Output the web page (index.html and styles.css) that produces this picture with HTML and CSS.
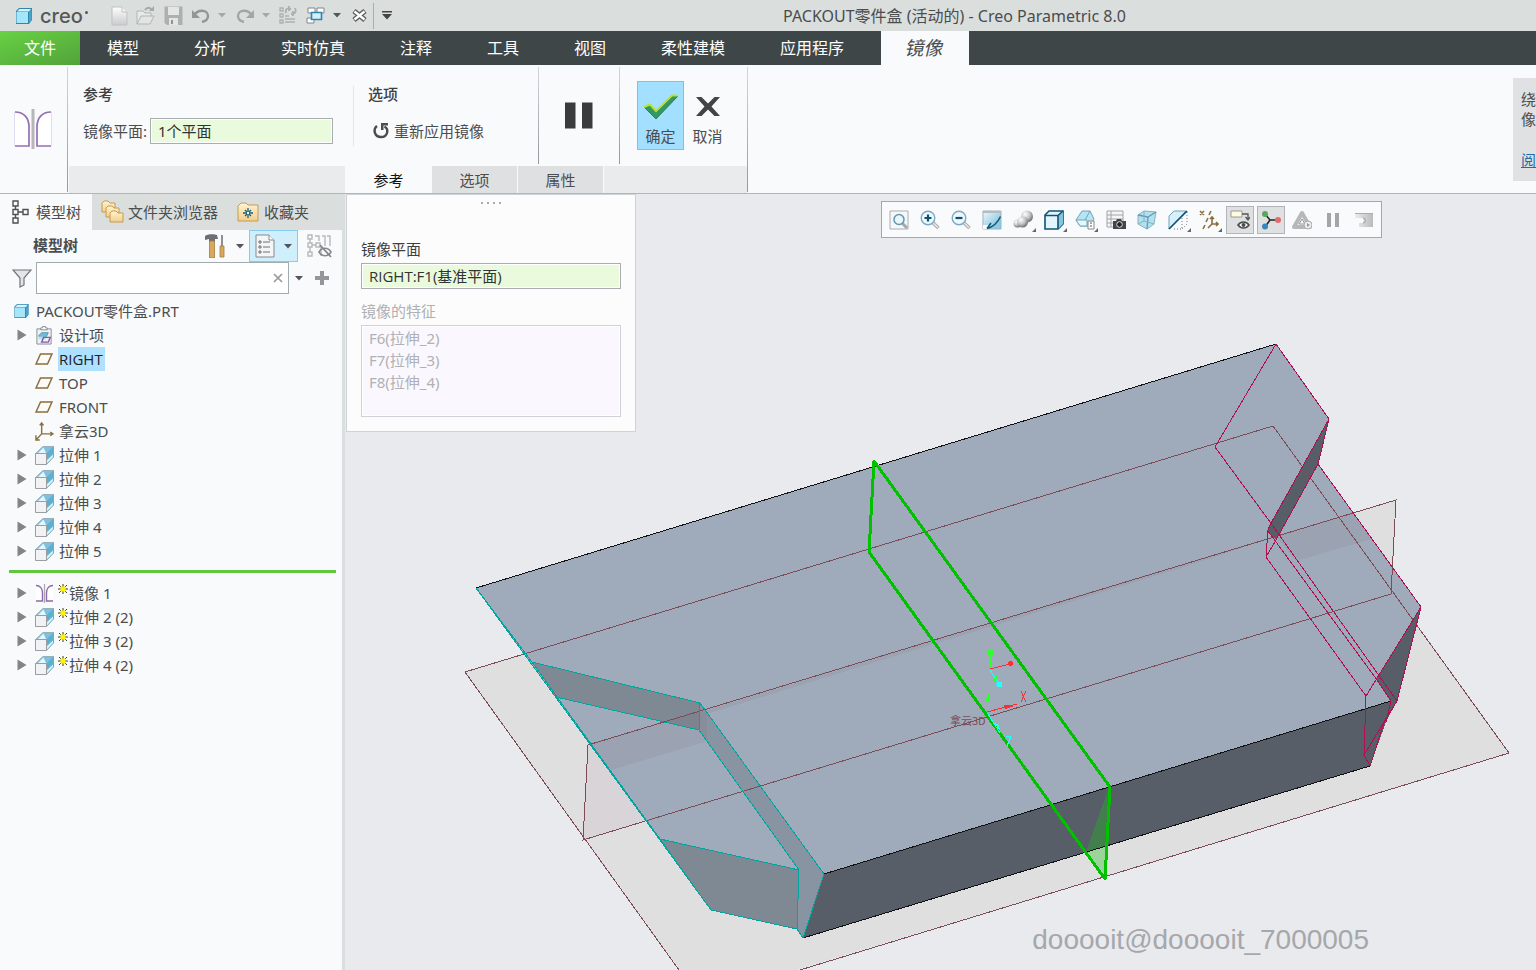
FILE: index.html
```html
<!DOCTYPE html>
<html lang="zh-CN">
<head>
<meta charset="utf-8">
<title>PACKOUT零件盒 (活动的) - Creo Parametric 8.0</title>
<link rel="stylesheet" href="styles.css">
</head>
<body>
<svg class="defs" aria-hidden="true">
  <defs>
    <linearGradient id="steel" x1="0" y1="0" x2="0" y2="1"><stop offset="0" stop-color="#fdfdfd"/><stop offset="1" stop-color="#c9cccd"/></linearGradient>
    <linearGradient id="ice" x1="0" y1="0" x2="1" y2="1"><stop offset="0" stop-color="#eefaff"/><stop offset="1" stop-color="#6fb9d6"/></linearGradient>
    <linearGradient id="grey" x1="0" y1="0" x2="1" y2="0"><stop offset="0" stop-color="#eceded"/><stop offset="1" stop-color="#b9bbbc"/></linearGradient>
    <linearGradient id="tan" x1="0" y1="0" x2="0" y2="1"><stop offset="0" stop-color="#fff3d0"/><stop offset="1" stop-color="#f1cf8c"/></linearGradient>
    <radialGradient id="ball" cx=".35" cy=".3" r=".8"><stop offset="0" stop-color="#fff"/><stop offset=".5" stop-color="#c4c4c4"/><stop offset="1" stop-color="#5a5a5a"/></radialGradient>
    <symbol id="cube" viewBox="0 0 18 18"><path d="M1 4 4 1H17V13L14 17H1Z" fill="#2f87ad"/><path d="M2 4.500 4.500 2H16L14 4.500Z" fill="#d5f4ff"/><path d="M1.500 5H13V16H1.500Z" fill="#a5e6fb"/><path d="M14 5 16.500 2.500V13L14 16Z" fill="#4aa3c8"/></symbol>
    <symbol id="caret" viewBox="0 0 8 5"><path d="M0 0H8L4 4.500Z" fill="currentColor"/></symbol>
    <symbol id="arrow" viewBox="0 0 10 12"><path d="M.5.500 9.500 6 .5 11.500Z" fill="#838485"/></symbol>
    <symbol id="extrude" viewBox="0 0 19 19"><path d="M.5 7.500 8 .5H18.500L11.500 7.500Z" fill="#7fc1dc" stroke="#8aa5b0" stroke-width=".8"/><path d="M3 7 8.500 1.500 11 7Z" fill="#e4f7fe"/><path d="M11.500 7.500 18.500.5V11L11.500 18Z" fill="#5fafcf"/><path d="M12 14 18.500 8V11L12 18Z" fill="#d3f2fb"/><path d="M.5 7.500H11.500V18.500H.5Z" fill="#f2f2f4" stroke="#9c9da0"/><path d="M11.500 18.500 18.500 11V.5" stroke="#8aa5b0" fill="none"/></symbol>
    <symbol id="plane" viewBox="0 0 18 12"><path d="M5.500 1H17L12.500 11H1Z" fill="#fdfbf5" stroke="#8a6f3f" stroke-width="1.500"/></symbol>
    <symbol id="mirror" viewBox="0 0 38 40"><path d="M1 3V37" stroke="#c9c2e4"/><path d="M1 3C10 3 15 9 15 18V37H1" fill="#fff" stroke="#9470b4" stroke-width="1.700"/><path d="M37 3V37" stroke="#c9c2e4"/><path d="M37 3C28 3 23 9 23 18V37H37" fill="#fff" stroke="#9470b4" stroke-width="1.700"/><path d="M17.500 0H20.500V40H17.500Z" fill="#b7b7b9"/></symbol>
    <symbol id="mirror-s" viewBox="0 0 19 19"><path d="M1 1.500C6 1.500 7.500 6 7.500 9V17H1M18 1.500C13 1.500 11.500 6 11.500 9V17H18" fill="#fff" stroke="#8c68ae" stroke-width="1.400"/><path d="M9.500 0V19" stroke="#aaa" stroke-width="1.300"/></symbol>
    <symbol id="spark" viewBox="0 0 10 10"><path d="M5 0V10M0 5H10M1 1 9 9M9 1 1 9" stroke="#3a3d20"/><path d="M2.500 2.500H7.500V7.500H2.500Z" fill="#fff200"/></symbol>
    <symbol id="zoomlens" viewBox="0 0 20 20"><path d="M12 12 18.500 18" stroke="#a9abac" stroke-width="3.500"/><path d="M12 12 18 17.500" stroke="#e9e9e9" stroke-width="1.500"/><circle cx="8" cy="8" r="6.800" fill="#eef8fd" stroke="#7fa9c0" stroke-width="1.400"/></symbol>
  </defs>
</svg>

<header class="titlebar">
  <svg class="i18 logo-cube"><use href="#cube"/></svg>
  <span class="logo">creo<i></i></span>
  <div class="quick">
    <button class="q q-new" aria-label="新建"><svg width="17" height="20" viewBox="0 0 17 20"><path d="M1 1H11L16 6V19H1Z" fill="url(#steel)" stroke="#bfc2c2"/><path d="M11 1V6H16" fill="#f4f4f4" stroke="#bfc2c2"/></svg></button>
    <button class="q q-open" aria-label="打开"><svg width="20" height="20" viewBox="0 0 20 20"><path d="M2 18V5H8L10 7H16V10" fill="#e8eaea" stroke="#b2b5b5"/><path d="M2 18 6 10H19L15 18Z" fill="#e3e5e5" stroke="#b2b5b5"/><path d="M10 4C12 1 15 1 17 4" fill="none" stroke="#a6a9a9" stroke-width="2"/><path d="M14 5H19V0" fill="#a6a9a9"/></svg></button>
    <button class="q q-save" aria-label="保存"><svg width="19" height="20" viewBox="0 0 19 20"><path d="M.5.500H18.500V19H3L.5 17Z" fill="#adb0b1"/><path d="M4 1H15V9H4Z" fill="#e4e6e6"/><path d="M5 12H14V19H5Z" fill="#e4e6e6"/><path d="M7 14H9V18H7Z" fill="#909394"/></svg></button>
    <button class="q q-undo" aria-label="撤消"><svg width="20" height="16" viewBox="0 0 20 16"><path d="M3 8C6 1 17 1 17 8 17 11 15 13 11 14" fill="none" stroke="#939697" stroke-width="2.400"/><path d="M1 2V10H9Z" fill="#939697"/></svg></button>
    <svg class="caret faint c1"><use href="#caret"/></svg>
    <button class="q q-redo" aria-label="重做"><svg width="20" height="16" viewBox="0 0 20 16"><path d="M17 8C14 1 3 1 3 8 3 11 5 13 9 14" fill="none" stroke="#a3a6a7" stroke-width="2.400"/><path d="M19 2V10H11Z" fill="#a3a6a7"/></svg></button>
    <svg class="caret faint c2"><use href="#caret"/></svg>
    <button class="q q-regen" aria-label="重新生成"><svg width="18" height="19" viewBox="0 0 18 19" fill="none" stroke="#aeb1b1"><path d="M1 2H4V5H1ZM1 8H4V11H1ZM1 14H4V17H1ZM6 10H10M6 13H16M6 16H16" stroke-width="1.400"/><path d="M7 7C6 2 9 2 12 3M10 0V5M16 2C18 7 15 8 12 8M14 5V10" stroke-width="1.900"/></svg></button>
    <button class="q q-win" aria-label="窗口"><svg width="19" height="18" viewBox="0 0 19 18"><g fill="#fff" stroke="#838687"><path d="M2 1H9V6H2Z"/><path d="M11 1H18V6H11Z"/><path d="M1 11H8V16H1Z"/></g><path d="M5.500 5.500H15.500V12.500H5.500Z" fill="#d5f0fb" stroke="#2c87ac" stroke-width="1.600"/></svg></button>
    <svg class="caret c3"><use href="#caret"/></svg>
    <button class="q q-close" aria-label="关闭"><svg width="15" height="13" viewBox="0 0 15 13"><path d="M2 2 13 11M13 2 2 11" stroke="#58595a" stroke-width="5"/><path d="M2.500 2.500 12.500 10.500M12.500 2.500 2.500 10.500" stroke="#fff" stroke-width="2.400"/></svg></button>
    <span class="q-sep"></span>
    <button class="q q-more" aria-label="自定义"><svg width="10" height="9" viewBox="0 0 10 9"><path d="M0 0H10V1.500H0ZM0 3H10L5 8.500Z" fill="#444"/></svg></button>
  </div>
  <h1 class="title">PACKOUT零件盒 (活动的) - Creo Parametric 8.0</h1>
</header>

<nav class="menubar">
  <button class="file">文件</button>
  <div class="menus">
    <button>模型</button><button>分析</button><button>实时仿真</button><button>注释</button><button>工具</button><button>视图</button><button>柔性建模</button><button>应用程序</button>
  </div>
  <button class="active-menu">镜像</button>
</nav>

<section class="ribbon">
  <div class="feature"><svg width="38" height="40"><use href="#mirror"/></svg></div>
  <span class="rule tall"></span>
  <div class="dash">
    <div class="groups">
      <div class="group ref">
        <h2>参考</h2>
        <div class="row"><label for="mp">镜像平面:</label><input id="mp" class="collector" readonly value="1个平面"></div>
      </div>
      <span class="rule soft"></span>
      <div class="group opt">
        <h2>选项</h2>
        <button class="reapply"><svg width="18" height="18" viewBox="0 0 18 18"><path d="M5 4C1 7 2 15 9 15 16 15 17 7 12.500 4.500" fill="none" stroke="#4b4d4f" stroke-width="2.400"/><path d="M9 1H16V3.500H11.500V8H9Z" fill="#4b4d4f"/></svg>重新应用镜像</button>
      </div>
      <span class="rule"></span>
      <button class="pause" aria-label="暂停"><svg width="28" height="28" viewBox="0 0 28 28"><path d="M0 .500H10.500V26.500H0ZM17 .500H27.500V26.500H17Z" fill="#3b3b3c"/></svg></button>
      <span class="rule"></span>
      <div class="decide">
        <button class="ok"><svg width="36" height="28" viewBox="0 0 36 28"><path d="M1 14 7 12 13 19 30 3H35L13 26Z" fill="#2f9a63" stroke="#246e46" stroke-width=".8"/><path d="M1 14 7 11.500 13 18 29 2.500H35" fill="none" stroke="#b9e334" stroke-width="2"/></svg>确定</button>
        <button class="cancel"><svg width="36" height="28" viewBox="0 0 36 28"><path d="M6 4H11.500L18 10.500 24.500 4H30L21.500 13.500 30 23H24.500L18 16.500 11.500 23H6L14.500 13.500Z" fill="#434446"/></svg>取消</button>
      </div>
    </div>
    <div class="strip">
      <span class="fill-l"></span>
      <button class="on">参考</button><button>选项</button><button>属性</button>
      <span class="fill-r"></span>
    </div>
  </div>
  <span class="rule tall"></span>
  <aside class="tip"><p>绕<br>像</p><a href="#more">阅</a></aside>
</section>

<main class="work">
  <aside class="side">
    <div class="side-tabs">
      <button class="on"><svg width="17" height="24" viewBox="0 0 17 24" fill="none" stroke="#4d4f51" stroke-width="1.400"><path d="M1 1H6V6H1ZM1 9.500H6V14.500H1ZM1 18H6V23H1ZM11 9.500H16V14.500H11ZM3.500 6V9.500M3.500 14.500V18M6 12H11"/></svg>模型树</button>
      <button><svg width="23" height="24" viewBox="0 0 23 24" fill="url(#tan)" stroke="#c69b52"><path d="M1 12V3L3 1H7L9 3H14V12Z"/><path d="M5 17V8L7 6H11L13 8H18V17Z"/><path d="M9 22V13L11 11H15L17 13H22V22Z"/></svg>文件夹浏览器</button>
      <button><svg width="22" height="20" viewBox="0 0 22 20"><path d="M1 19V4L4 1H9L11 3H21V19Z" fill="url(#tan)" stroke="#c69b52"/><path d="M11 6V16M6 11H16M8 8 14 14M14 8 8 14" stroke="#176083" stroke-width="1.300"/><circle cx="11" cy="11" r="1.200" fill="#fff"/></svg>收藏夹</button>
    </div>
    <div class="tree-bar">
      <h2>模型树</h2>
      <button aria-label="设置"><svg width="21" height="24" viewBox="0 0 21 24"><path d="M1 2C3 0 10 0 13 1L14 5H11V8H5V5L1 6Z" fill="#6b7074"/><path d="M5.500 7H10.500V24H5.500Z" fill="#d8a860" stroke="#a67b3e" stroke-width=".8"/><path d="M18 1V12" stroke="#8b9095" stroke-width="2"/><path d="M16 12H20V23H16Z" fill="#d8a860" stroke="#a67b3e" stroke-width=".8"/></svg></button>
      <svg class="caret"><use href="#caret"/></svg>
      <button class="show" aria-label="显示"><svg width="20" height="24" viewBox="0 0 20 24"><path d="M1 1H14L19 6V23H1Z" fill="#f4f5f5" stroke="#85898c"/><path d="M14 1V6H19" fill="#fff" stroke="#85898c"/><path d="M4 7H6V9H4ZM4 12H6V14H4ZM4 17H6V19H4ZM8 8H15M8 13H15M8 18H15" fill="none" stroke="#6d7174"/></svg><svg class="caret"><use href="#caret"/></svg></button>
      <button class="hide" aria-label="隐藏"><svg width="25" height="24" viewBox="0 0 25 24" fill="none" stroke="#b6babb"><path d="M1 1H5V5H1ZM1 9H5V13H1ZM1 18H5V22H1ZM9 9H13V13H9ZM3 5V9M3 13V18M5 11H9M8 2H12V7M15 2H18V12M20 2H23V12M14 12V22" stroke-width="1.400"/><path d="M12 18C15 13 21 13 24 18 21 23 15 23 12 18Z" stroke="#85898b" stroke-width="1.600"/><path d="M13 11 24 23" stroke="#85898b" stroke-width="1.800"/></svg></button>
    </div>
    <div class="search">
      <svg width="20" height="19" viewBox="0 0 20 19"><path d="M1 1H19L12 9V16L8 18V9Z" fill="#e3e5e6" stroke="#717578" stroke-width="1.200"/></svg>
      <div class="box"><input aria-label="搜索模型树" type="text"><button aria-label="清除"><svg width="10" height="10" viewBox="0 0 10 10"><path d="M1 1 9 9M9 1 1 9" stroke="#97999a" stroke-width="1.700"/></svg></button></div>
      <svg class="caret"><use href="#caret"/></svg>
      <button aria-label="添加"><svg width="14" height="14" viewBox="0 0 14 14"><path d="M5 0H9V5H14V9H9V14H5V9H0V5H5Z" fill="#94979a"/></svg></button>
    </div>
    <ul class="tree">
      <li class="root"><svg class="i16"><use href="#cube"/></svg><span>PACKOUT零件盒.PRT</span></li>
      <li><svg class="tw"><use href="#arrow"/></svg><svg class="ic" viewBox="0 0 20 20"><path d="M2 3H17V19H2Z" fill="#f0f1f2" stroke="#888d92"/><path d="M6 4V2H8V.5H11V2H13V4Z" fill="#fff" stroke="#888d92"/><path d="M4 10 7 7H14L12 11H4Z" fill="#6fbedc" stroke="#357d9b" stroke-width=".7"/><path d="M4 11H11V14H4Z" fill="#a9e0f2"/><path d="M9 12H16L14 17H7Z" fill="none" stroke="#8459aa" stroke-width="1.500"/></svg><span>设计项</span></li>
      <li><i class="tw"></i><svg class="ic" viewBox="0 -3 19 19"><use href="#plane" width="18" height="12"/></svg><span class="sel">RIGHT</span></li>
      <li><i class="tw"></i><svg class="ic" viewBox="0 -3 19 19"><use href="#plane" width="18" height="12"/></svg><span>TOP</span></li>
      <li><i class="tw"></i><svg class="ic" viewBox="0 -3 19 19"><use href="#plane" width="18" height="12"/></svg><span>FRONT</span></li>
      <li><i class="tw"></i><svg class="ic" viewBox="0 0 20 20" fill="none" stroke="#8a6f3f" stroke-width="1.500"><path d="M7 2V12.500H18M7 12.500 2 18M5 3.500 7 1 9 3.500M16 10.500 19 12.500 16 14.500M1 14V19H5"/></svg><span>拿云3D</span></li>
      <li><svg class="tw"><use href="#arrow"/></svg><svg class="ic"><use href="#extrude"/></svg><span>拉伸 1</span></li>
      <li><svg class="tw"><use href="#arrow"/></svg><svg class="ic"><use href="#extrude"/></svg><span>拉伸 2</span></li>
      <li><svg class="tw"><use href="#arrow"/></svg><svg class="ic"><use href="#extrude"/></svg><span>拉伸 3</span></li>
      <li><svg class="tw"><use href="#arrow"/></svg><svg class="ic"><use href="#extrude"/></svg><span>拉伸 4</span></li>
      <li><svg class="tw"><use href="#arrow"/></svg><svg class="ic"><use href="#extrude"/></svg><span>拉伸 5</span></li>
    </ul>
    <hr class="insert">
    <ul class="tree after">
      <li><svg class="tw"><use href="#arrow"/></svg><svg class="ic"><use href="#mirror-s"/></svg><svg class="spark"><use href="#spark"/></svg><span>镜像 1</span></li>
      <li><svg class="tw"><use href="#arrow"/></svg><svg class="ic"><use href="#extrude"/></svg><svg class="spark"><use href="#spark"/></svg><span>拉伸 2 (2)</span></li>
      <li><svg class="tw"><use href="#arrow"/></svg><svg class="ic"><use href="#extrude"/></svg><svg class="spark"><use href="#spark"/></svg><span>拉伸 3 (2)</span></li>
      <li><svg class="tw"><use href="#arrow"/></svg><svg class="ic"><use href="#extrude"/></svg><svg class="spark"><use href="#spark"/></svg><span>拉伸 4 (2)</span></li>
    </ul>
  </aside>

  <section class="stage">
    <svg class="scene" viewBox="345 194 1191 776" preserveAspectRatio="xMinYMin slice" shape-rendering="crispEdges" fill="none">
      <path d="M465 672 1273 426 1509 753 701 999Z" fill="#e0dfe0"/>
      <path d="M588 745 1396 500 1391 594 583 840Z" fill="#d8d4d8"/>
      <path d="M1320 523 1396 500 1391 594 1340 610Z" fill="#e0dfe0"/>
      <path d="M476 588 1276 344 1329 419 1318 464 1421 607 1397 701 1386 722 1370 766 803 938 797 929 711 910Z" fill="#9fabbb"/>
      <path d="M590 745 700 711 708 741 611 770Z" fill="#9ba3b2"/>
      <path d="M1276 536 1354 513 1372 539 1296 561Z" fill="#9ba3b2"/>
      <path d="M707 710 1268 539 1200 562 707 714Z" fill="#9ba3b2"/>
      <path d="M824 874 1391 701 1377 679 1421 607 1397 701 1386 722 1370 766 803 938Z" fill="#585e68"/>
      <path d="M1329 419 1270 525 1268 531 1276 540 1318 464Z" fill="#585e68"/>
      <path d="M532 662 700 703 699 730 556 697Z" fill="#7e8994"/>
      <path d="M660 839 799 870 797 929 711 910Z" fill="#7e8994"/>
      <path d="M700 703 824 874 803 938 797 929 799 870 699 730Z" fill="#8994a2"/>
      <path d="M662 722 700 711 699 730Z" fill="#7f838f"/>
      <path d="M700 705 707 712V741L699 730Z" fill="#888d9b"/>
      <path d="M1109 787 1104 879 1086 852Z" fill="#41804c"/>
      <path d="M1086 852 1106 846 1104 879Z" fill="#9ad49a"/>
      <g stroke="#7c4d57">
        <path d="M679 970 465 672 1273 426 1509 753 800 970"/>
        <path d="M588 745 1396 500 1391 594 583 840Z"/>
      </g>
      <path d="M476 588 1276 344M824 874 1391 701M803 938 1370 766" stroke="#111"/>
      <g stroke="#00a59f">
        <path d="M476 588 530 662 711 910 797 929 803 938 824 874 700 703 532 662 557 697 660 839 799 870 797 929M476 588 532 662M556 697 699 730 799 870M700 703 699 730M660 839 711 910"/>
      </g>
      <g stroke="#b0104f">
        <path d="M1215 447 1276 344 1329 419 1318 464 1421 607 1397 701 1385 720 1370 766 1364 755 1366 696 1266 557 1276 540 1318 464M1329 419 1270 525 1268 530 1266 557M1215 447 1270 522 1397 701M1268 531 1377 680 1391 701 1386 722M1366 696 1421 607M1364 755 1397 701"/>
      </g>
      <path d="M874 461 1110 787 1105 879 869 552Z" stroke="#00c000" stroke-width="3" stroke-linejoin="round"/>
      <g stroke-width="1">
        <path d="M990 669V653M987 712V690M993 675 996 684M997 676 995 681" stroke="#2fff2f"/>
        <circle cx="990.500" cy="652.500" r="3" fill="#2fff2f"/>
        <path d="M988 690 990 701H986Z" fill="#2fff2f"/>
        <path d="M990 669 1010 664M987 712 1017 704" stroke="#ff2f2f"/>
        <circle cx="1010.500" cy="663.500" r="2.500" fill="#ff2f2f"/>
        <path d="M1004 705 1014 706 1005 709Z" fill="#ff2f2f"/>
        <path d="M1021 691 1026 702M1026 691 1021 702" stroke="#ff2f2f"/>
        <path d="M990 670 999 684M988 714 1000 733M1006 736H1011L1007 746" stroke="#2ff"/>
        <circle cx="999.500" cy="684.500" r="3" fill="#2ff"/>
        <path d="M994 723 998 724 1001 732Z" fill="#2ff"/>
      </g>
      <text x="950" y="725" class="csys">拿云3D</text>
    </svg>

    <div class="panel">
      <div class="grip"><i></i><i></i><i></i><i></i></div>
      <label for="pl">镜像平面</label>
      <input id="pl" class="collector" readonly value="RIGHT:F1(基准平面)">
      <h3>镜像的特征</h3>
      <ul class="features"><li>F6(拉伸_2)</li><li>F7(拉伸_3)</li><li>F8(拉伸_4)</li></ul>
    </div>

    <div class="viewbar">
      <button aria-label="重新调整"><svg viewBox="0 0 20 20"><path d="M1 1H19V19H1Z" fill="#f6f7f7" stroke="#aaadaf"/><path d="M13 13 18 18" stroke="#a5a7a8" stroke-width="3"/><circle cx="10" cy="9.500" r="5" fill="#e9f7fd" stroke="#6196b3" stroke-width="1.500"/></svg></button>
      <button aria-label="放大"><svg viewBox="0 0 20 20"><use href="#zoomlens" width="20" height="20"/><path d="M8 4.500V11.500M4.500 8H11.500" stroke="#09537b" stroke-width="2.200"/></svg></button>
      <button aria-label="缩小"><svg viewBox="0 0 20 20"><use href="#zoomlens" width="20" height="20"/><path d="M4.500 8H11.500" stroke="#09537b" stroke-width="2.200"/></svg></button>
      <button aria-label="重画"><svg viewBox="0 0 20 20"><path d="M1 1H19V19H1Z" fill="url(#ice)" stroke="#9fb3bd"/><path d="M1 1H19V3H1Z" fill="#b5bcc0"/><path d="M1 15H8L6 19H1Z" fill="#fff"/><path d="M6 18C12 16 16 12 18.500 7V18.500H6Z" fill="#8fcae0"/><path d="M5 18.500C11 17 16 12 18.500 6.500M9 13 5 18.500" fill="none" stroke="#155a7c" stroke-width="1.600"/></svg></button>
      <button class="more" aria-label="显示样式"><svg viewBox="0 0 20 20"><circle cx="4.500" cy="13.500" r="4" fill="url(#ball)"/><circle cx="14" cy="6.500" r="6" fill="url(#ball)"/><circle cx="9.500" cy="12" r="5.500" fill="url(#ball)"/></svg></button>
      <button class="more" aria-label="着色"><svg viewBox="0 0 20 20"><path d="M1 5 5 1H19V14L14 19H1Z" fill="#e2f5fc" stroke="#0e5378" stroke-width="1.600"/><path d="M14 6 19 1V14L14 19Z" fill="#83c4de"/><path d="M1 5.500H14V19M14 5.500 19 1" fill="none" stroke="#0e5378" stroke-width="1.600"/></svg></button>
      <button class="more" aria-label="已保存方向"><svg viewBox="0 0 20 20"><path d="M1 10 7 1H15L19 9 15 16H5Z" fill="#b5e4f5" stroke="#72a3b8"/><path d="M1 10H12V16H5Z" fill="#e6f7fd" stroke="#72a3b8"/><path d="M15 1 10 10" fill="none" stroke="#72a3b8"/><path d="M13 11H19V19H13Z" fill="#fff" stroke="#888"/><path d="M15 13H17M15 16H17" stroke="#555"/></svg></button>
      <button aria-label="视图管理器"><svg viewBox="0 0 20 20"><path d="M1 1H17V17H1ZM1 5H17M1 9H17M1 13H10M5 1V17" fill="#f5f5f5" stroke="#a1a5a7"/><path d="M7 11H10L11 9H15L16 11H20V19H7Z" fill="#434648"/><circle cx="13.500" cy="14.500" r="2.800" fill="#222" stroke="#ddd"/></svg></button>
      <button aria-label="透视图"><svg viewBox="0 0 20 20"><path d="M1 5 7 1 19 2 17 14 10 19 1 14Z" fill="#b5dfee" stroke="#81b4c8"/><path d="M1 5 11 7 10 19M11 7 19 2" fill="none" stroke="#5c9bb5" stroke-width="1.300"/><path d="M7 1V11L1 14M7 11 17 14" fill="none" stroke="#7db5cb"/></svg></button>
      <button class="more" aria-label="截面"><svg viewBox="0 0 20 20"><path d="M1 6 6 1H18L1 19Z" fill="#d5f0f9" stroke="#70a4b9"/><path d="M6 19H14V7M14 19 19 14V2" fill="none" stroke="#777" stroke-dasharray="1 2"/><path d="M1 19 19 1" stroke="#115477" stroke-width="1.700"/></svg></button>
      <button class="more" aria-label="基准显示"><svg viewBox="0 0 20 20" fill="none" stroke="#8a6f3f" stroke-width="1.600"><path d="M1 1 5 5M5 1 1 5M12 1 10 5M9 8 7 12M6 15 4 19M13 7V14H19M13 14 9 18M11 9 13 7 15 9M17 12 19 14 17 16"/></svg></button>
      <button class="pressed" aria-label="注释显示"><svg viewBox="0 0 20 20"><path d="M1 1H12V7H1Z" fill="#fffbe0" stroke="#9b9c95"/><path d="M12 4H18V9M15.500 7 18 10 20 7" fill="none" stroke="#555" stroke-width="1.300"/><path d="M8 15C11 11 16 11 19 15 16 19 11 19 8 15Z" fill="#fff" stroke="#4b4d4f" stroke-width="1.600"/><circle cx="13.500" cy="15" r="2" fill="#4b4d4f"/></svg></button>
      <button class="pressed" aria-label="旋转中心"><svg viewBox="0 0 20 20"><path d="M4 4 9 10H17M9 10 4 17" fill="none" stroke="#222" stroke-width="1.500"/><circle cx="4" cy="4" r="3" fill="#58a75c"/><circle cx="17" cy="10" r="3" fill="#e36a6a"/><circle cx="4" cy="16.500" r="3" fill="#3a86ba"/></svg></button>
      <button aria-label="仿真"><svg viewBox="0 0 20 20"><path d="M10 3 18 17H2Z" fill="none" stroke="#b5b7b8" stroke-width="4" stroke-linejoin="round"/><path d="M10 9 13 14H7Z" fill="#f7f9fb" stroke="#929495"/><circle cx="16" cy="15" r="4" fill="#eee" stroke="#aaa"/><path d="M15 13 18 15 15 17Z" fill="#999"/></svg></button>
      <button aria-label="暂停仿真"><svg viewBox="0 0 20 20"><path d="M4 3H8V17H4ZM12 3H16V17H12Z" fill="#a3a5a7"/></svg></button>
      <button aria-label="结果"><svg viewBox="0 0 20 20"><path d="M1 3H19V17H5V13H9C12 13 12 8 9 8H1Z" fill="url(#grey)"/><path d="M1 3H19V4H1ZM9 7.500C13 7.500 13 13.500 9 13.500V12C11 12 11 9 9 9Z" fill="#a9abac"/></svg></button>
    </div>
    <p class="mark">dooooit@dooooit_7000005</p>
  </section>
</main>
</body>
</html>
```
FILE: styles.css
```css
* { box-sizing: border-box; }
body {
  margin: 0;
  height: 100vh;
  display: flex;
  flex-direction: column;
  overflow: hidden;
  font: 15px/24px "Noto Sans", "Noto Sans CJK SC", sans-serif;
  color: #4b4d4f;
  background: #f8fafc;
}
button {
  margin: 0; padding: 0; border: 0; background: none;
  font: inherit; color: inherit;
  display: flex; align-items: center;
  flex: none; white-space: nowrap;
}
svg { flex: none; }
h1, h2, h3, p, ul { margin: 0; padding: 0; font-weight: 400; font-size: inherit; list-style: none; }
.defs { position: absolute; width: 0; height: 0; }
.i18 { width: 18px; height: 18px; }
.i16 { width: 17px; height: 16px; }
.caret { width: 8px; height: 5px; color: #555; }
.caret.faint { color: #a5a8a8; }

.titlebar { display: flex; align-items: center; height: 31px; flex: none; padding-left: 15px; background: #dadfde; }
.logo { display: flex; margin-left: 7px; width: 71px; font: 500 20px/24px Inter, sans-serif; color: #55585a; }
.logo i { width: 3px; height: 3px; margin: 7px 0 0 2px; border-radius: 50%; background: #55585a; }
.quick { display: flex; align-items: center; width: 282px; flex: none; }
.q-open { margin-left: 7px; }
.q-save { margin-left: 9px; }
.q-undo { margin-left: 8px; }
.c1, .c2 { margin-left: 7px; }
.q-redo, .q-regen { margin-left: 9px; }
.q-win { margin-left: 9px; }
.c3 { margin-left: 8px; }
.q-close { margin-left: 11px; }
.q-sep { width: 1px; height: 26px; margin-left: 6px; background: #a9adad; }
.q-more { margin-left: 8px; }
.title { flex: 1; padding-left: 390px; font-size: 16px; white-space: nowrap; color: #4a4c4e; }

.menubar { display: flex; height: 34px; flex: none; background: #3e4647; color: #fff; font-size: 16px; }
.file { width: 80px; justify-content: center; background: linear-gradient(160deg, #68d244, #52a23a); }
.menus { display: flex; gap: 55px; padding: 0 37px 0 27px; }
.active-menu { width: 88px; padding-left: 23px; background: #f8fafc; color: #4b4d4f; font-size: 19px; font-style: italic; }

.ribbon { display: flex; height: 129px; flex: none; background: #f8fafc; border-bottom: 1px solid #b2b5bc; }
.feature { width: 67px; padding-left: 14px; display: flex; align-items: center; }
.rule { width: 1px; height: 97px; margin-top: 2px; flex: none; background: linear-gradient(#d4d6d9, #94979b); }
.rule.tall { height: 125px; }
.rule.soft { height: 60px; margin-top: 21px; background: #e3e5e8; }
.dash { width: 679px; padding-left: 1px; display: flex; flex-direction: column; }
.groups { display: flex; height: 101px; }
.group h2 { font-weight: 500; color: #3d3f41; }
.ref { width: 284px; padding: 17px 0 0 14px; }
.ref .row { display: flex; align-items: center; margin-top: 12px; }
.ref label { width: 67px; white-space: nowrap; }
.collector { width: 183px; height: 26px; padding: 0 7px 2px; border: 1px solid #a9acb0; background: #e9fbdc; box-shadow: inset 0 0 0 1px #fff; font: inherit; color: #333; }
.opt { width: 184px; padding: 17px 0 0 14px; }
.reapply { gap: 4px; margin: 13px 0 0 4px; }
.pause { width: 80px; justify-content: center; }
.decide { display: flex; align-items: flex-start; padding: 16px 0 0 17px; }
.decide button { flex-direction: column; width: 47px; height: 69px; padding-top: 11px; border: 1px solid transparent; gap: 3px; }
.decide .ok { background: #a3dfff; border-color: #6ec7f0; }
.strip { display: flex; height: 27px; gap: 1px; }
.strip button { width: 85px; justify-content: center; background: #dfe0e2; }
.strip .on { background: #f8fafc; color: #111; }
.fill-l { width: 276px; background: #e9ebec; }
.fill-r { flex: 1; background: #e9ebec; }
.tip { width: 23px; height: 103px; margin: 13px 0 0 auto; padding: 11px 0 0 8px; background: #dfe1e3; line-height: 20px; }
.tip a { display: block; margin-top: 21px; color: #1c6ea6; }

.work { display: flex; flex: 1; min-height: 0; }
.side { width: 345px; flex: none; background: #f8fafc; border-right: 3px solid #dadfde; }
.side-tabs { display: flex; height: 36px; background: #dadfde; }
.side-tabs button { padding: 0 10px 0 9px; gap: 4px; }
.side-tabs .on { width: 92px; padding: 0 0 0 12px; gap: 7px; background: #f8fafc; }
.side-tabs button:last-child { gap: 5px; }
.tree-bar { display: flex; align-items: center; height: 32px; padding-left: 33px; }
.tree-bar h2 { font-weight: 700; width: 171px; line-height: 22px; padding-bottom: 2px; }
.tree-bar .caret { margin-left: 11px; }
.tree-bar .show { width: 49px; height: 32px; margin-left: 5px; padding-left: 5px; background: #d0effd; border: 1px solid #85cdf0; }
.tree-bar .show .caret { margin-left: 9px; }
.tree-bar .hide { margin-left: 9px; }
.search { display: flex; align-items: center; height: 32px; padding-left: 12px; }
.box { display: flex; align-items: center; width: 253px; height: 32px; margin-left: 4px; border: 1px solid #a0acae; background: #fff; }
.box input { flex: 1; min-width: 0; height: 28px; border: 0; background: none; font: inherit; }
.box button { margin-right: 5px; }
.search .caret { margin: 0 12px 0 6px; }
.tree { padding: 5px 0 0 17px; }
.tree li { display: flex; align-items: center; height: 24px; white-space: nowrap; }
.tree .root { margin-left: -4px; gap: 5px; }
.tw { width: 10px; height: 12px; }
.ic { width: 19px; height: 19px; margin: 0 4px 0 8px; }
.tree span { padding: 0 1px; }
.tree .sel { padding: 0 2px 0 1px; background: #aee1ff; color: #222; }
.sel, #pl { font-family: "Open Sans", "Noto Sans CJK SC", sans-serif; }
.spark { width: 10px; height: 10px; margin-bottom: 8px; }
.insert { height: 3px; margin: 7px 6px 0 9px; border: 0; background: #63c63f; }
.after { padding-top: 8px; }

.stage { position: relative; flex: 1; min-width: 0; overflow: hidden; background: #e9eaee; }
.scene { display: block; width: 100%; height: 100%; }
.csys { font: 11px "Noto Sans CJK SC", sans-serif; fill: #7c4d57; }
.panel { position: absolute; left: 1px; top: 0; width: 290px; padding: 7px 14px 14px; background: #fcfcfc; border: 1px solid #cfd2d6; }
.grip { display: flex; justify-content: center; gap: 4px; height: 35px; }
.grip i { width: 2px; height: 2px; background: #aaa; }
.panel label { display: block; color: #3d3f41; }
.panel .collector { display: block; width: 100%; margin-top: 2px; }
.panel h3 { margin-top: 10px; color: #aeb0b2; }
.features { height: 92px; margin-top: 2px; padding: 1px 7px; border: 1px solid #cfd2d6; background: #faf8fe; box-shadow: inset 0 0 0 1px #fff; line-height: 22px; color: #b0b1b3; }
.viewbar { position: absolute; left: 536px; top: 7px; display: flex; align-items: center; gap: 3px; height: 37px; padding: 0 3px; border: 1px solid #a5a8ab; background: #f8fafc; }
.viewbar button { position: relative; width: 28px; height: 28px; justify-content: center; border: 1px solid transparent; }
.viewbar svg { width: 20px; height: 20px; }
.viewbar .pressed { background: #dfe0e2; border-color: #b2b4b8; }
.more::after { content: ""; position: absolute; right: 0; bottom: 1px; border: 2px solid #666; border-top-color: transparent; border-left-color: transparent; }
.mark { position: absolute; right: 167px; bottom: 14px; font: 28px/32px "Liberation Sans", Arial, sans-serif; color: #a6a7aa; }
```
